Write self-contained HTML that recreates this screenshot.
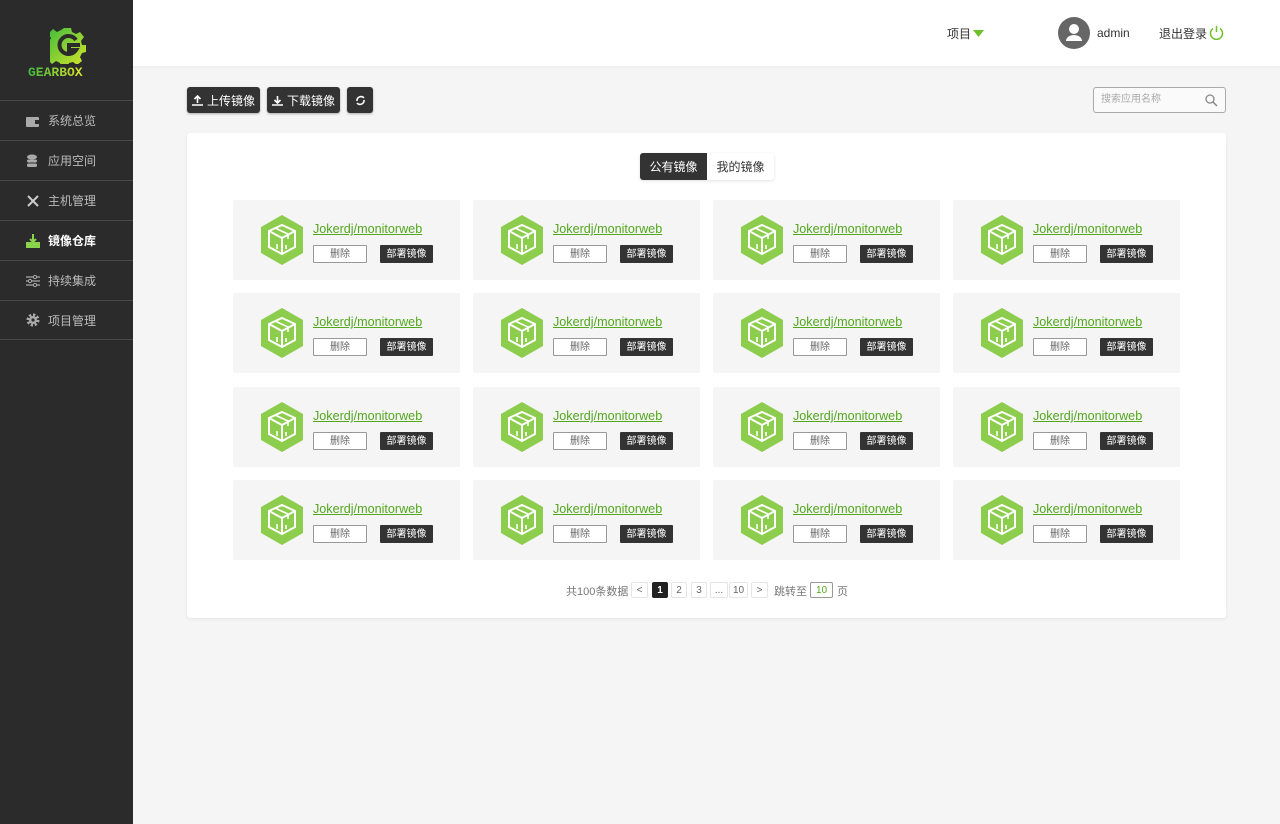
<!DOCTYPE html>
<html><head><meta charset="utf-8"><style>
*{margin:0;padding:0;box-sizing:border-box}
body{width:1280px;height:824px;background:#f5f5f5;font-family:"Liberation Sans","Noto Sans CJK SC",sans-serif;position:relative;overflow:hidden;font-size:12px}
.side{position:absolute;left:0;top:0;width:133px;height:824px;background:#2b2b2b}
.menu{position:absolute;left:0;top:100px;width:133px}
.mi{height:40px;border-top:1px solid #4a4a4a;display:flex;align-items:center;padding-left:26px;color:#bbb;font-size:12px}
.mi:last-child{border-bottom:1px solid #4a4a4a}
.mi svg{margin-right:8px}
.mi.act{color:#fff;font-weight:bold}
.head{position:absolute;left:133px;top:0;right:0;height:66px;background:#fff;box-shadow:0 1px 3px rgba(0,0,0,.05)}
.btn{position:absolute;top:87px;height:26px;background:#333;color:#fff;border-radius:3px;box-shadow:0 1px 2px rgba(0,0,0,.3);display:flex;align-items:center;justify-content:center;font-size:12px;gap:4px}
.panel{position:absolute;left:187px;top:133px;width:1039px;height:485px;background:#fff;border-radius:3px;box-shadow:0 1px 3px rgba(0,0,0,.08)}
.card{position:absolute;width:227px;height:80px;background:#f5f5f5;border-radius:2px}
.card svg{position:absolute;left:27px;top:15px}
.card .t{position:absolute;left:80px;top:22px;color:#52a81e;text-decoration:underline;font-size:12.6px;line-height:15px}
.card .d{position:absolute;left:80px;top:45px;width:54px;height:18px;border:1px solid #999;background:#fff;color:#666;font-size:10px;text-align:center;line-height:18px;border-radius:1px}
.card .p{position:absolute;left:147px;top:45px;width:53px;height:18px;background:#333;color:#fff;font-size:10px;text-align:center;line-height:19px;border-radius:1px}
.pg{position:absolute;top:582px;height:16px;border:1px solid #e5e5e5;background:#fff;font-size:10px;color:#666;text-align:center;line-height:15px;border-radius:2px}
</style></head><body>
<div class="side">
<svg style="position:absolute;left:50px;top:26px" width="36" height="38" viewBox="0 0 36 38"><defs><linearGradient id="g" x1="0" y1="0" x2="1" y2="1"><stop offset="0" stop-color="#3cbb3c"/><stop offset="1" stop-color="#d6e52a"/></linearGradient></defs><path d="M14 2h7l1 4 4 2 4-2 4 5-3 4 1 4h4v7l-4 1-2 4 2 4-5 4-4-3-4 1-1 4h-7l-1-4-4-2-4 3-5-5 3-4-1-4-4-1v-7l4-1 2-4-3-4 5-5 4 3 4-2z" fill="url(#g)"/><path d="M26 14a9 9 0 1 0 0 10h-7v-5h11" fill="none" stroke="#2b2b2b" stroke-width="4"/></svg>
<div style="position:absolute;left:28px;top:65px;font-size:13px;font-weight:bold;background:linear-gradient(90deg,#3cbb3c,#e0e52a);-webkit-background-clip:text;color:transparent;font-family:'Liberation Mono',monospace">GEARBOX</div>
<div class="menu">
<div class="mi"><svg width="14" height="12"><rect x="0" y="2" width="13" height="10" rx="1" fill="#aaa"/><rect x="9" y="5" width="4" height="4" fill="#2b2b2b"/></svg>系统总览</div>
<div class="mi"><svg width="14" height="14"><ellipse cx="6" cy="3" rx="5" ry="2.5" fill="#aaa"/><rect x="1" y="5.5" width="10" height="3" rx="1.5" fill="#aaa"/><rect x="1" y="9.5" width="10" height="3.5" rx="1.5" fill="#aaa"/></svg>应用空间</div>
<div class="mi"><svg width="14" height="14"><path d="M2 2l10 10M12 2L2 12" stroke="#ccc" stroke-width="2"/></svg>主机管理</div>
<div class="mi act"><svg width="14" height="14"><rect x="0" y="8" width="14" height="6" fill="#8bd34a"/><path d="M7 0v8M4 5l3 3 3-3" stroke="#8bd34a" stroke-width="2" fill="none"/></svg>镜像仓库</div>
<div class="mi"><svg width="14" height="14"><path d="M0 3h14M0 7h14M0 11h14" stroke="#aaa" stroke-width="1.2"/><circle cx="9" cy="3" r="1.6" fill="#2b2b2b" stroke="#aaa"/><circle cx="4" cy="7" r="1.6" fill="#2b2b2b" stroke="#aaa"/><circle cx="9" cy="11" r="1.6" fill="#2b2b2b" stroke="#aaa"/></svg>持续集成</div>
<div class="mi"><svg width="14" height="14"><circle cx="7" cy="7" r="5" fill="none" stroke="#aaa" stroke-width="3" stroke-dasharray="2.2 1.7"/><circle cx="7" cy="7" r="4" fill="#aaa"/><circle cx="7" cy="7" r="1.6" fill="#2b2b2b"/></svg>项目管理</div>
</div></div>
<div class="head">
<div style="position:absolute;left:814px;top:25px;color:#333">项目</div>
<svg style="position:absolute;left:840px;top:30px" width="11" height="7"><path d="M0 0h11L5.5 7z" fill="#6fbf2a"/></svg>
<div style="position:absolute;left:925px;top:17px;width:32px;height:32px;border-radius:50%;background:#666"></div>
<svg style="position:absolute;left:925px;top:17px" width="32" height="32"><circle cx="16" cy="12" r="5" fill="#fff"/><path d="M8 24a8 6 0 0 1 16 0z" fill="#fff"/></svg>
<div style="position:absolute;left:964px;top:26px;color:#333">admin</div>
<div style="position:absolute;left:1026px;top:25px;color:#333">退出登录</div>
<svg style="position:absolute;left:1076px;top:25px" width="15" height="15"><path d="M4 3.5a6 6 0 1 0 7 0" fill="none" stroke="#6fbf2a" stroke-width="1.5"/><path d="M7.5 1v6" stroke="#6fbf2a" stroke-width="1.5"/></svg>
</div>
<div class="btn" style="left:187px;width:73px"><svg width="11" height="11"><path d="M5.5 8V1M2.5 4l3-3 3 3M0 10h11" stroke="#fff" stroke-width="1.6" fill="none"/></svg>上传镜像</div>
<div class="btn" style="left:267px;width:73px"><svg width="11" height="11"><path d="M5.5 1v7M2.5 5l3 3 3-3M0 10h11" stroke="#fff" stroke-width="1.6" fill="none"/></svg>下载镜像</div>
<div class="btn" style="left:347px;width:26px"><svg width="11" height="11"><path d="M2 6a4 4 0 0 1 7-3M9 5a4 4 0 0 1-7 3" stroke="#fff" stroke-width="1.6" fill="none"/></svg></div>
<div style="position:absolute;left:1093px;top:87px;width:133px;height:26px;border:1px solid #aaa;border-radius:3px;background:#fafafa;color:#aaa;font-size:10px;padding:6px 0 0 7px;line-height:12px">搜索应用名称
<svg style="position:absolute;right:7px;top:6px" width="13" height="13"><circle cx="5" cy="5" r="4" fill="none" stroke="#888" stroke-width="1.3"/><path d="M8 8l4 4" stroke="#888" stroke-width="1.5"/></svg></div>
<div class="panel">
<div style="position:absolute;left:453px;top:20px;width:134px;height:27px;box-shadow:0 1px 3px rgba(0,0,0,.12);border-radius:3px;background:#fff;display:flex;font-size:12px">
<div style="width:67px;background:#333;color:#fff;text-align:center;line-height:28px;border-radius:3px 0 0 3px">公有镜像</div>
<div style="width:67px;color:#333;text-align:center;line-height:28px">我的镜像</div></div>
</div>
<div id="cards"></div>
<div style="position:absolute;left:566px;top:583px;font-size:11px;color:#777">共100条数据</div>
<div class="pg" style="left:631px;width:17px">&lt;</div>
<div class="pg" style="left:652px;width:16px;background:#222;color:#fff;border-color:#222;font-weight:bold">1</div>
<div class="pg" style="left:671px;width:16px">2</div>
<div class="pg" style="left:691px;width:16px">3</div>
<div class="pg" style="left:710px;width:18px">...</div>
<div class="pg" style="left:729px;width:19px">10</div>
<div class="pg" style="left:751px;width:17px">&gt;</div>
<div style="position:absolute;left:774px;top:583px;font-size:11px;color:#777">跳转至</div>
<div class="pg" style="left:810px;width:23px;border-color:#999;color:#52a81e">10</div>
<div style="position:absolute;left:837px;top:583px;font-size:11px;color:#777">页</div>
<script>
var h='';var xs=[233,473,713,953],ys=[200,293,387,480];
var ic='<svg width="44" height="50" viewBox="0 0 44 50"><path d="M22 0l21 12v26L22 50 1 38V12z" fill="#8ccd4e"/><path d="M22 10l13 6v16l-13 7-13-7V16z M9 16l13 7 13-7 M22 23v16" fill="none" stroke="#fff" stroke-width="2"/><path d="M15 13l13 6v5M26 30v4M17 29v5" stroke="#fff" stroke-width="1.6" fill="none"/></svg>';
ys.forEach(function(y){xs.forEach(function(x){h+='<div class="card" style="left:'+x+'px;top:'+y+'px">'+ic+'<div class="t">Jokerdj/monitorweb</div><div class="d">删除</div><div class="p">部署镜像</div></div>';});});
document.getElementById('cards').innerHTML=h;
</script>
</body></html>
